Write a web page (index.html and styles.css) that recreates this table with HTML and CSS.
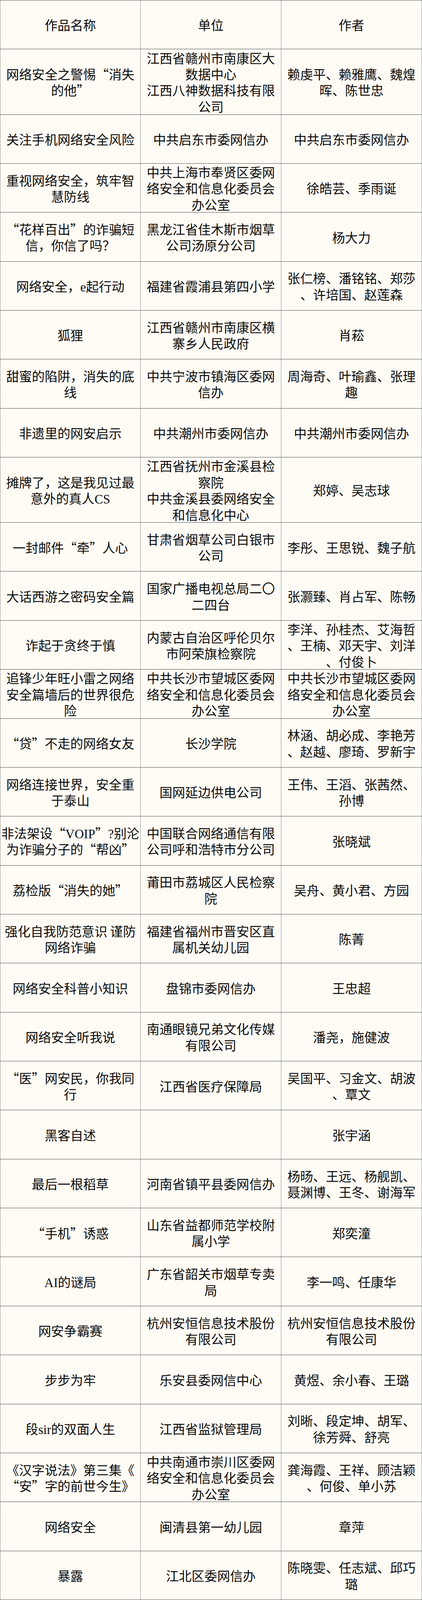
FILE: index.html
```html
<!DOCTYPE html>
<html lang="zh-CN">
<head>
<meta charset="utf-8">
<title>作品名单</title>
<link rel="stylesheet" href="styles.css">
</head>
<body>
<div class="sheet">
  <div class="row head">
    <div class="cell"><p>作品名称</p></div>
    <div class="cell"><p>单位</p></div>
    <div class="cell"><p>作者</p></div>
  </div>
  <div class="row tall">
    <div class="cell"><p>网络安全之警惕“消失<br>的他”</p></div>
    <div class="cell"><p>江西省赣州市南康区大<br>数据中心<br>江西八神数据科技有限<br>公司</p></div>
    <div class="cell"><p>赖虔平、赖雅鹰、魏煌<br>晖、陈世忠</p></div>
  </div>
  <div class="row">
    <div class="cell"><p>关注手机网络安全风险</p></div>
    <div class="cell"><p>中共启东市委网信办</p></div>
    <div class="cell"><p>中共启东市委网信办</p></div>
  </div>
  <div class="row">
    <div class="cell"><p>重视网络安全，筑牢智<br>慧防线</p></div>
    <div class="cell"><p>中共上海市奉贤区委网<br>络安全和信息化委员会<br>办公室</p></div>
    <div class="cell"><p>徐皓芸、季雨诞</p></div>
  </div>
  <div class="row">
    <div class="cell"><p>“花样百出”的诈骗短<br>信，你信了吗？</p></div>
    <div class="cell"><p>黑龙江省佳木斯市烟草<br>公司汤原分公司</p></div>
    <div class="cell"><p>杨大力</p></div>
  </div>
  <div class="row">
    <div class="cell"><p>网络安全，<span class="lat">e</span>起行动</p></div>
    <div class="cell"><p>福建省霞浦县第四小学</p></div>
    <div class="cell"><p>张仁榜、潘铭铭、郑莎<br>、许培国、赵莲森</p></div>
  </div>
  <div class="row">
    <div class="cell"><p>狐狸</p></div>
    <div class="cell"><p>江西省赣州市南康区横<br>寨乡人民政府</p></div>
    <div class="cell"><p>肖菘</p></div>
  </div>
  <div class="row">
    <div class="cell"><p>甜蜜的陷阱，消失的底<br>线</p></div>
    <div class="cell"><p>中共宁波市镇海区委网<br>信办</p></div>
    <div class="cell"><p>周海奇、叶瑜鑫、张理<br>趣</p></div>
  </div>
  <div class="row">
    <div class="cell"><p>非遗里的网安启示</p></div>
    <div class="cell"><p>中共潮州市委网信办</p></div>
    <div class="cell"><p>中共潮州市委网信办</p></div>
  </div>
  <div class="row tall">
    <div class="cell"><p>摊牌了，这是我见过最<br>意外的真人<span class="lat">CS</span></p></div>
    <div class="cell"><p>江西省抚州市金溪县检<br>察院<br>中共金溪县委网络安全<br>和信息化中心</p></div>
    <div class="cell"><p>郑婷、吴志球</p></div>
  </div>
  <div class="row">
    <div class="cell"><p>一封邮件“牵”人心</p></div>
    <div class="cell"><p>甘肃省烟草公司白银市<br>公司</p></div>
    <div class="cell"><p>李彤、王思锐、魏子航</p></div>
  </div>
  <div class="row">
    <div class="cell"><p>大话西游之密码安全篇</p></div>
    <div class="cell"><p>国家广播电视总局二〇<br>二四台</p></div>
    <div class="cell"><p>张灏臻、肖占军、陈畅</p></div>
  </div>
  <div class="row">
    <div class="cell"><p>诈起于贪终于慎</p></div>
    <div class="cell"><p>内蒙古自治区呼伦贝尔<br>市阿荣旗检察院</p></div>
    <div class="cell"><p>李洋、孙桂杰、艾海哲<br>、王楠、邓天宇、刘洋<br>、付俊卜</p></div>
  </div>
  <div class="row">
    <div class="cell"><p>追锋少年旺小雷之网络<br>安全篇墙后的世界很危<br>险</p></div>
    <div class="cell"><p>中共长沙市望城区委网<br>络安全和信息化委员会<br>办公室</p></div>
    <div class="cell"><p>中共长沙市望城区委网<br>络安全和信息化委员会<br>办公室</p></div>
  </div>
  <div class="row">
    <div class="cell"><p>“贷”不走的网络女友</p></div>
    <div class="cell"><p>长沙学院</p></div>
    <div class="cell"><p>林涵、胡必成、李艳芳<br>、赵越、廖琦、罗新宇</p></div>
  </div>
  <div class="row">
    <div class="cell"><p>网络连接世界，安全重<br>于泰山</p></div>
    <div class="cell"><p>国网延边供电公司</p></div>
    <div class="cell"><p>王伟、王滔、张茜然、<br>孙博</p></div>
  </div>
  <div class="row">
    <div class="cell"><p>非法架设“<span class="lat">VOIP</span>”<span class="lat">?</span>别沦<br>为诈骗分子的“帮凶”</p></div>
    <div class="cell"><p>中国联合网络通信有限<br>公司呼和浩特市分公司</p></div>
    <div class="cell"><p>张晓斌</p></div>
  </div>
  <div class="row">
    <div class="cell"><p>荔检版“消失的她”</p></div>
    <div class="cell"><p>莆田市荔城区人民检察<br>院</p></div>
    <div class="cell"><p>吴舟、黄小君、方园</p></div>
  </div>
  <div class="row">
    <div class="cell"><p>强化自我防范意识&nbsp;谨防<br>网络诈骗</p></div>
    <div class="cell"><p>福建省福州市晋安区直<br>属机关幼儿园</p></div>
    <div class="cell"><p>陈菁</p></div>
  </div>
  <div class="row">
    <div class="cell"><p>网络安全科普小知识</p></div>
    <div class="cell"><p>盘锦市委网信办</p></div>
    <div class="cell"><p>王忠超</p></div>
  </div>
  <div class="row">
    <div class="cell"><p>网络安全听我说</p></div>
    <div class="cell"><p>南通眼镜兄弟文化传媒<br>有限公司</p></div>
    <div class="cell"><p>潘尧，施健波</p></div>
  </div>
  <div class="row">
    <div class="cell"><p>“医”网安民，你我同<br>行</p></div>
    <div class="cell"><p>江西省医疗保障局</p></div>
    <div class="cell"><p>吴国平、习金文、胡波<br>、覃文</p></div>
  </div>
  <div class="row">
    <div class="cell"><p>黑客自述</p></div>
    <div class="cell"><p></p></div>
    <div class="cell"><p>张宇涵</p></div>
  </div>
  <div class="row">
    <div class="cell"><p>最后一根稻草</p></div>
    <div class="cell"><p>河南省镇平县委网信办</p></div>
    <div class="cell"><p>杨旸、王远、杨舰凯、<br>聂渊博、王冬、谢海军</p></div>
  </div>
  <div class="row">
    <div class="cell"><p>“手机”诱惑</p></div>
    <div class="cell"><p>山东省益都师范学校附<br>属小学</p></div>
    <div class="cell"><p>郑奕潼</p></div>
  </div>
  <div class="row">
    <div class="cell"><p><span class="lat">AI</span>的谜局</p></div>
    <div class="cell"><p>广东省韶关市烟草专卖<br>局</p></div>
    <div class="cell"><p>李一鸣、任康华</p></div>
  </div>
  <div class="row">
    <div class="cell"><p>网安争霸赛</p></div>
    <div class="cell"><p>杭州安恒信息技术股份<br>有限公司</p></div>
    <div class="cell"><p>杭州安恒信息技术股份<br>有限公司</p></div>
  </div>
  <div class="row">
    <div class="cell"><p>步步为牢</p></div>
    <div class="cell"><p>乐安县委网信中心</p></div>
    <div class="cell"><p>黄煜、余小春、王璐</p></div>
  </div>
  <div class="row">
    <div class="cell"><p>段<span class="lat">sir</span>的双面人生</p></div>
    <div class="cell"><p>江西省监狱管理局</p></div>
    <div class="cell"><p>刘晰、段定坤、胡军、<br>徐芳舜、舒亮</p></div>
  </div>
  <div class="row">
    <div class="cell"><p>《汉字说法》第三集《<br>“安”字的前世今生》</p></div>
    <div class="cell"><p>中共南通市崇川区委网<br>络安全和信息化委员会<br>办公室</p></div>
    <div class="cell"><p>龚海霞、王祥、顾洁颖<br>、何俊、单小苏</p></div>
  </div>
  <div class="row">
    <div class="cell"><p>网络安全</p></div>
    <div class="cell"><p>闽清县第一幼儿园</p></div>
    <div class="cell"><p>章萍</p></div>
  </div>
  <div class="row">
    <div class="cell"><p>暴露</p></div>
    <div class="cell"><p>江北区委网信办</p></div>
    <div class="cell"><p>陈晓雯、任志斌、邱巧<br>璐</p></div>
  </div>
</div>
</body>
</html>
```

FILE: styles.css
```css
html, body {
  margin: 0;
  padding: 0;
  background: #fffcf5;
}

.sheet {
  box-sizing: border-box;
  width: 1080px;
  height: 100vh;
  display: grid;
  grid-template-rows: 3fr 4fr repeat(7, 3fr) 4fr repeat(22, 3fr);
  border-top: 1px solid #4d4d4d;
  font-family: "Noto Sans CJK SC", "Noto Sans", sans-serif;
  font-weight: 400;
  font-size: 32.8px;
  line-height: calc(100vh * 42.6 / 4210);
  color: #0a0a0a;
}

.row {
  box-sizing: border-box;
  min-height: 0;
  display: grid;
  grid-template-columns: 360px 360px 360px;
  border-bottom: 1px solid #4d4d4d;
}

.cell {
  box-sizing: border-box;
  min-height: 0;
  padding: 0 12px;
  display: flex;
  align-items: center;
  justify-content: center;
  border-right: 1px solid #8c8c8c;
}

.cell:first-child {
  border-left: 1px solid #8c8c8c;
}

.cell p {
  margin: 0;
  text-align: center;
  white-space: nowrap;
}

.lat {
  font-family: "Liberation Serif", serif;
  line-height: 1;
}
```
